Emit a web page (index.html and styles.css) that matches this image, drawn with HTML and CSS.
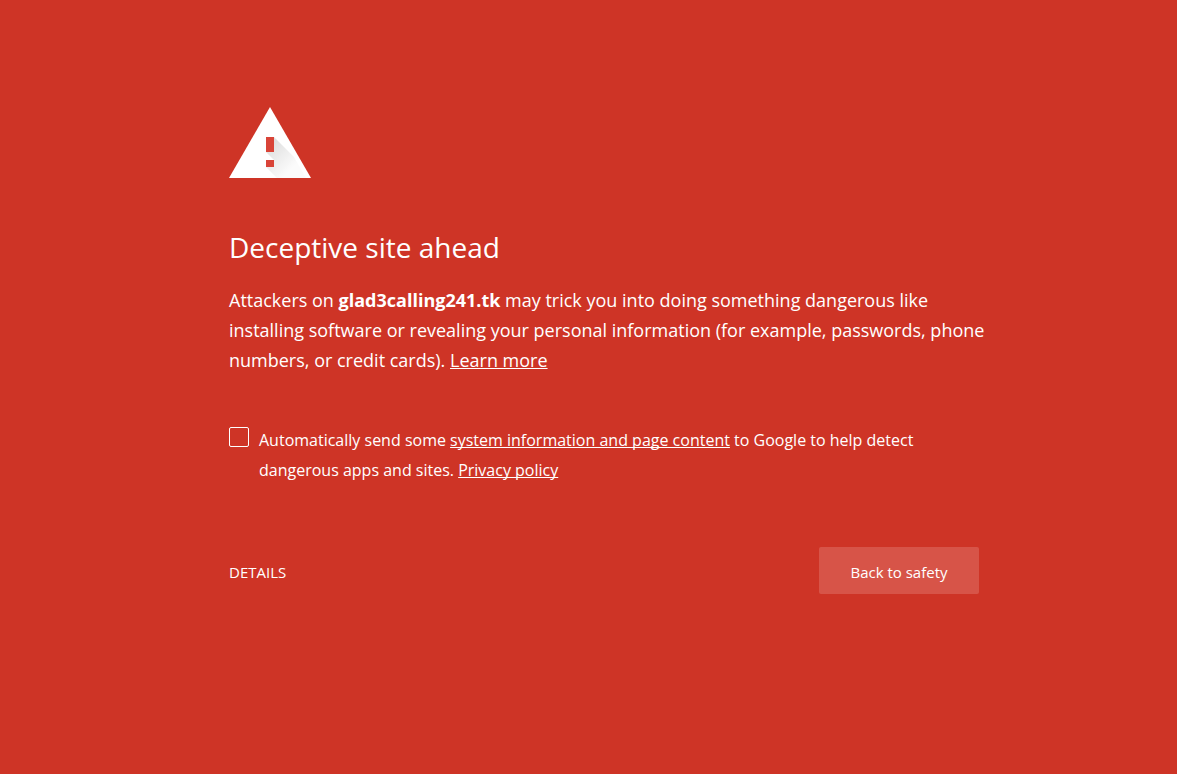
FILE: index.html
```html
<!DOCTYPE html>
<html lang="en">
<head>
<meta charset="utf-8">
<meta name="viewport" content="width=device-width, initial-scale=1">
<title>Security error</title>
<link rel="stylesheet" href="styles.css">
</head>
<body>
<main class="interstitial">
  <svg class="warning-icon" viewBox="0 0 82 71" aria-hidden="true">
    <defs>
      <linearGradient id="shade" gradientUnits="userSpaceOnUse" x1="40" y1="40" x2="62" y2="62">
        <stop offset="0" stop-color="#e0e0e0"/>
        <stop offset="1" stop-color="#fbfbfb"/>
      </linearGradient>
    </defs>
    <path fill="#fff" d="M41 0 82 71H0z"/>
    <path fill="url(#shade)" d="M45 30 65 50 77 71H48L37 60H45V53L37 45H45z"/>
    <path fill="#d94438" d="M37 30h8v15h-8zM37 53h8v7h-8z"/>
  </svg>
  <h1 class="title">Deceptive site ahead</h1>
  <p class="message">Attackers on <strong>glad3calling241.tk</strong> may trick you into doing something dangerous like installing software or revealing your personal information (for example, passwords, phone numbers, or credit cards). <a class="link" href="#">Learn more</a></p>
  <div class="opt-in">
    <input class="opt-in-box" type="checkbox" id="opt-in">
    <label class="opt-in-label" for="opt-in">Automatically send some <a class="link" href="#">system information and page content</a> to Google to help detect dangerous apps and sites. <a class="link" href="#">Privacy policy</a></label>
  </div>
  <div class="actions">
    <button class="details" type="button">DETAILS</button>
    <button class="primary" type="button">Back to safety</button>
  </div>
</main>
</body>
</html>
```
FILE: styles.css
```css
* {
  box-sizing: border-box;
}

body {
  margin: 0;
  background: #ce3426;
  color: #fff;
  font-family: "Segoe UI", "Open Sans", "Noto Sans", sans-serif;
}

.interstitial {
  max-width: 979px;
  margin-right: 198px;
  padding: 107px 0 40px 229px;
}

.warning-icon {
  display: block;
  width: 82px;
  height: 71px;
}

.title {
  margin: 50px 0 18px;
  font-size: 28px;
  line-height: 39px;
  font-weight: 400;
}

.message {
  margin: 0 -16px 0 0;
  font-size: 18px;
  line-height: 30px;
}

.link {
  color: inherit;
  text-decoration: underline;
  text-decoration-thickness: 1px;
  text-underline-offset: 1px;
  text-decoration-skip-ink: none;
}

.opt-in {
  display: flex;
  align-items: flex-start;
  gap: 10px;
  margin-top: 50px;
  padding-right: 60px;
}

.opt-in-box {
  appearance: none;
  flex: none;
  width: 20px;
  height: 20px;
  margin: 2px 0 0;
  border: 1px solid #fff;
  border-radius: 2px;
}

.opt-in-box:checked {
  background: #fff;
}

.opt-in-label {
  font-size: 16px;
  line-height: 30px;
}

.actions {
  display: flex;
  align-items: center;
  justify-content: space-between;
  margin-top: 62px;
}

.details,
.primary {
  border: 0;
  background: none;
  color: inherit;
  font-family: inherit;
  font-size: 15px;
  line-height: 23px;
  cursor: pointer;
}

.details {
  padding: 14px 0 10px;
}

.primary {
  min-width: 160px;
  padding: 14px 24px 10px;
  border-radius: 2px;
  background: #d75448;
}
```
